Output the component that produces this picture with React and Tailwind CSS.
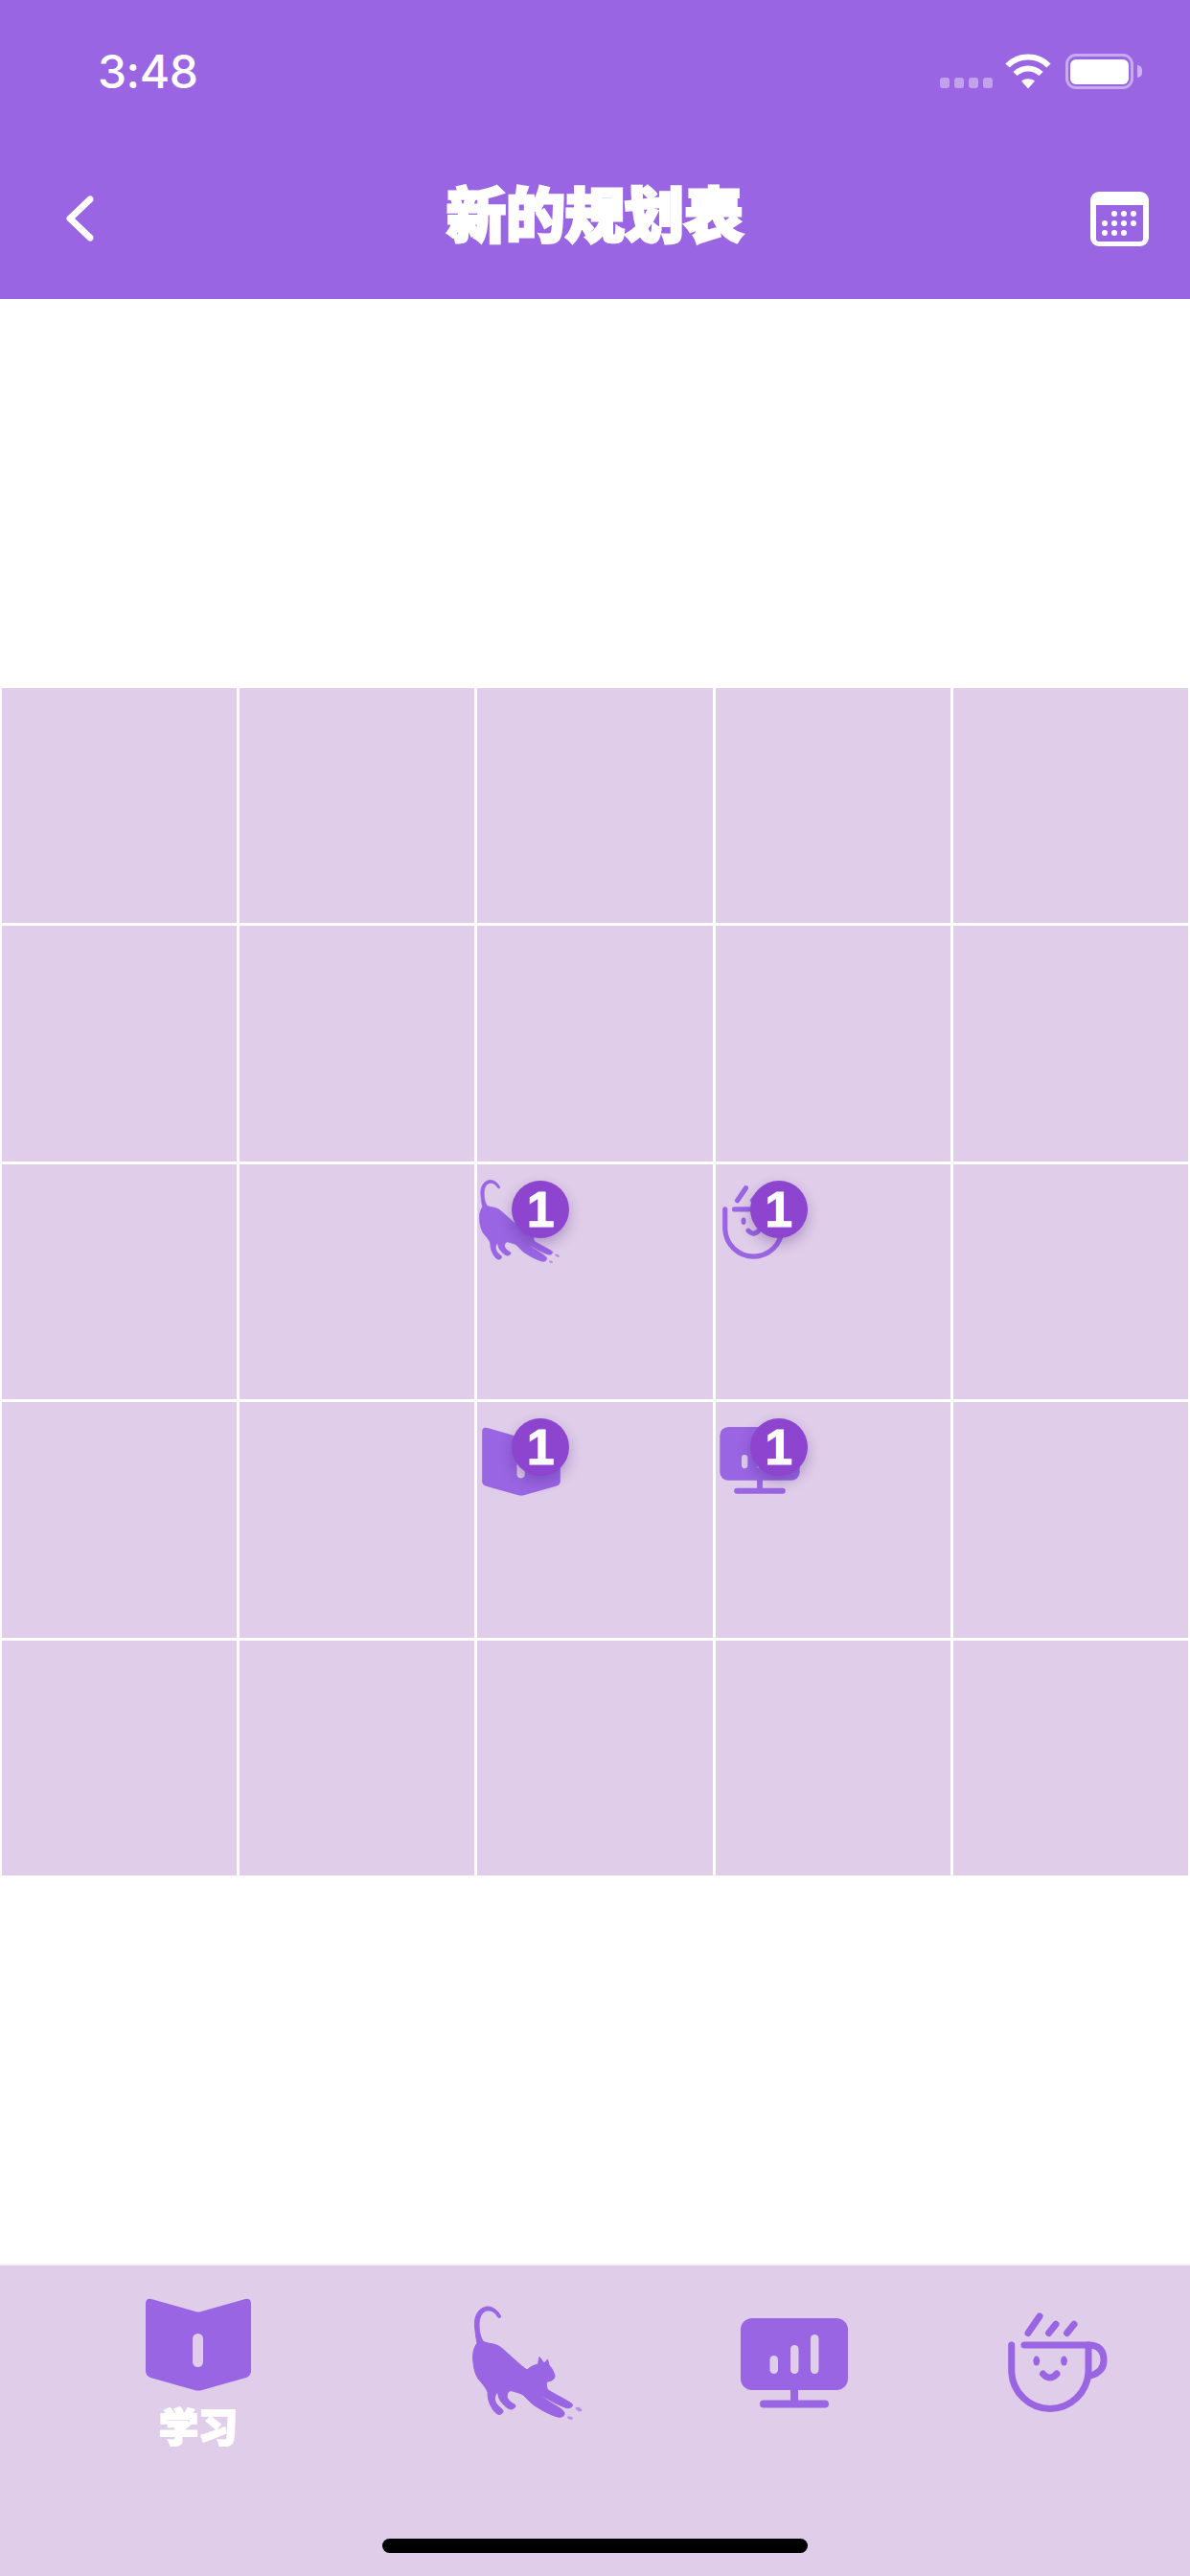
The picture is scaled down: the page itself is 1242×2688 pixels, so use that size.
import React from "react";

const purple = "#9965e2";
const lilac = "#dfcde9";

function BookIcon({ className }) {
  return (
    <svg viewBox="0 0 110 97" className={className}>
      <path
        fill={purple}
        d="M0 6Q0 0 6 1L52 14Q55 15 58 14L104 1Q110 0 110 6V76Q110 81 105 83L59 96Q55 97 51 96L5 83Q0 81 0 76Z"
      />
      <rect x="49" y="37" width="11" height="35" rx="5.5" fill={lilac} />
    </svg>
  );
}

function CatIcon({ className }) {
  return (
    <svg viewBox="0 0 117 119" className={className}>
      <path
        fill={purple}
        stroke={purple}
        strokeWidth="1"
        strokeLinejoin="round"
        d="M29.5 11C27 5 21 0.5 15 1C7 2 2 10 2.5 20C3 28 4 34 5 39C1.5 44 0 50 0.8 57C1.5 66 3 71 6 76C10 81 14 85 16 90C16 96 17 100 19 104C21 108 24 113 28 113.5C32 113 33 110 31 108C27 105 23 101 23.5 96C24 93 25 91 26.5 90C27 94 28 98 30 100C33 104 37 108 41 108C45 107 46 104 44 103C40 101 36.5 98 36 94C36.5 91 38 89 40 88.5C45 90 50 91 53 93C58 98 62 103 68 106C74 110 82 114 89 116C93 117 96.5 115 96 112C95 109 93 108 90 106C84 102 76 98 71 93C78 97 90 104 98 106.5C102 107.5 105 105 104.5 103C103 101 100 100 97 98C90 94 84 91 79 88C77 85 77 82 78 79C82 79 86 77 86 73C85 69 83 65 80 62L78.5 56L75 60L70 53.5L68.5 61C64 62 60 64 57 67C50 62 43 55 36 49C31 44 27 41 22 40C18 39 14 39 11 37C8 32 7 26 7 20C7 12 10 6 15.5 5C20 4.5 24 7 26 11C27 13 30 13 29.5 11Z"
      />
      <ellipse cx="111" cy="108" rx="3.5" ry="1.8" fill={purple} opacity="0.6" transform="rotate(25 111 108)" />
      <ellipse cx="102" cy="117" rx="3" ry="1.5" fill={purple} opacity="0.6" transform="rotate(20 102 117)" />
    </svg>
  );
}

function MonitorIcon({ className }) {
  return (
    <svg viewBox="0 0 112 94" className={className}>
      <rect x="0" y="0" width="112" height="75" rx="12" fill={purple} />
      <rect x="30.5" y="39" width="8.5" height="19" rx="4.2" fill={lilac} />
      <rect x="52" y="28" width="8.5" height="30" rx="4.2" fill={lilac} />
      <rect x="73" y="17" width="8.5" height="41" rx="4.2" fill={lilac} />
      <rect x="52" y="74" width="8" height="13" fill={purple} />
      <rect x="20" y="85.5" width="72" height="8" rx="4" fill={purple} />
    </svg>
  );
}

function CupIcon({ className }) {
  return (
    <svg viewBox="0 0 104 106" className={className} fill="none" stroke={purple} strokeWidth="7" strokeLinecap="round">
      <path d="M3.7 34V62A40.2 40.5 0 0 0 84 62V34" />
      <path d="M17 34H84Q100 34 100 50Q100 62 86 66" />
      <path d="M21 21.5L33 4M42.6 21.5L50 12.3M61.6 21.5L69 12.3" />
      <path d="M36.5 64Q43.6 72 51 64" />
      <ellipse cx="29.8" cy="50.6" rx="3.4" ry="5" fill={purple} stroke="none" />
      <ellipse cx="58.5" cy="50.6" rx="3.4" ry="5" fill={purple} stroke="none" />
    </svg>
  );
}

function WifiIcon() {
  return (
    <svg viewBox="0 0 48 37" className="h-[37px] w-[48px]" fill="none" stroke="#fff" strokeWidth="6">
      <path d="M2.5 12.5C14 0.5 34 0.5 45.5 12.5" />
      <path d="M10.5 21C18 13.5 30 13.5 37.5 21" />
      <path d="M24 36.5L17 28.5C20.5 25.5 27.5 25.5 31 28.5Z" fill="#fff" stroke="none" />
    </svg>
  );
}

function CalendarIcon() {
  const dots = [
    [25, 23], [35, 23], [45, 23],
    [15, 33], [25, 33], [35, 33], [45, 33],
    [15, 43], [25, 43], [35, 43],
  ];
  return (
    <svg viewBox="0 0 61 57" className="h-[57px] w-[61px]">
      <rect x="0" y="0" width="61" height="57" rx="9" fill="#fff" />
      <path d="M6 14H55V49Q55 52 52 52H9Q6 52 6 49Z" fill={purple} />
      {dots.map(([x, y]) => (
        <circle key={x + "-" + y} cx={x} cy={y} r="3" fill="#fff" />
      ))}
    </svg>
  );
}

function Badge() {
  return (
    <div className="absolute top-[17px] left-[36px] flex h-[60px] w-[60px] items-center justify-center rounded-full bg-[#8d45d0] font-['Liberation_Sans',sans-serif] text-[52px] leading-none font-bold text-white shadow-[0_6px_14px_rgba(70,30,120,0.3)] [-webkit-text-stroke:1px_white]">
      1
    </div>
  );
}

// which cells hold an activity icon
const placed = {
  12: <CatIcon className="ml-[2px] mt-[15px] h-[89px] w-[86px]" />,
  13: <CupIcon className="ml-[7px] mt-[21px] h-[80px] w-[77px]" />,
  17: <BookIcon className="ml-[5px] mt-[26px] h-[72px] w-[82px]" />,
  18: <MonitorIcon className="ml-[4px] mt-[26px] h-[70px] w-[84px]" />,
};

function Cell({ index }) {
  const icon = placed[index];
  return (
    <div className="relative h-[245.4px] bg-[#dfcde9]">
      {icon}
      {icon && <Badge />}
    </div>
  );
}

export default function App() {
  return (
    <div className="flex h-[2688px] w-[1242px] flex-col overflow-hidden bg-white">
      <header className="h-[312px] shrink-0 bg-[#9965e2] text-white">
        <div className="flex h-[150px] items-start pt-[46px]">
          <span className="ml-[102px] font-['Inter',sans-serif] text-[48px] leading-[58px] font-medium tracking-[-0.5px]">
            3:48
          </span>
          <div className="mt-[10px] mr-[50px] ml-auto flex items-end">
            <div className="mr-[13px] mb-[1px] flex gap-[5px] opacity-40">
              <span className="h-[11px] w-[10px] rounded-[3px] bg-white" />
              <span className="h-[11px] w-[10px] rounded-[3px] bg-white" />
              <span className="h-[11px] w-[10px] rounded-[3px] bg-white" />
              <span className="h-[11px] w-[10px] rounded-[3px] bg-white" />
            </div>
            <WifiIcon />
            <div className="ml-[15px] flex h-[37px] w-[71px] items-center justify-center rounded-[11px] border-[3px] border-white/45">
              <div className="h-[26px] w-[61px] rounded-[6px] bg-white" />
            </div>
            <div className="mb-[12px] ml-[4px] h-[13px] w-[5px] rounded-r-full bg-white/50" />
          </div>
        </div>
        <div className="flex h-[156px] items-center justify-between pr-[43px] pl-[68px]">
          <svg viewBox="0 0 30 48" className="h-[48px] w-[30px]" fill="none" stroke="#fff" strokeWidth="7" strokeLinecap="round" strokeLinejoin="round">
            <path d="M26 4L5 24L26 44" />
          </svg>
          <h1 className="mb-[14px] ml-[6px] font-['Noto_Sans_CJK_SC',sans-serif] text-[62px] leading-none font-black [-webkit-text-stroke:3px_white]">
            新的规划表
          </h1>
          <CalendarIcon />
        </div>
      </header>

      <main className="pt-[404.5px]">
        <div className="grid grid-cols-5 gap-[3px] px-[1.5px] pt-[1.5px]">
          {Array.from({ length: 25 }, (_, i) => (
            <Cell key={i} index={i} />
          ))}
        </div>
      </main>

      <nav className="relative mt-auto flex h-[326px] items-start border-t-2 border-[#f4f4f4] bg-[#dfcde9] pl-[152px]">
        <div className="mt-[34px] flex flex-col items-center">
          <BookIcon className="h-[97px] w-[110px]" />
          <span className="mt-[13px] font-['Noto_Sans_CJK_SC',sans-serif] text-[41px] leading-[44px] font-black text-white [-webkit-text-stroke:2px_white]">
            学习
          </span>
        </div>
        <CatIcon className="mt-[42px] ml-[231px] h-[119px] w-[117px]" />
        <MonitorIcon className="mt-[55px] ml-[163px] h-[94px] w-[112px]" />
        <CupIcon className="mt-[49px] ml-[167px] h-[106px] w-[104px]" />
        <div className="absolute bottom-[24px] left-1/2 h-[15px] w-[444px] -translate-x-1/2 rounded-full bg-black" />
      </nav>
    </div>
  );
}
